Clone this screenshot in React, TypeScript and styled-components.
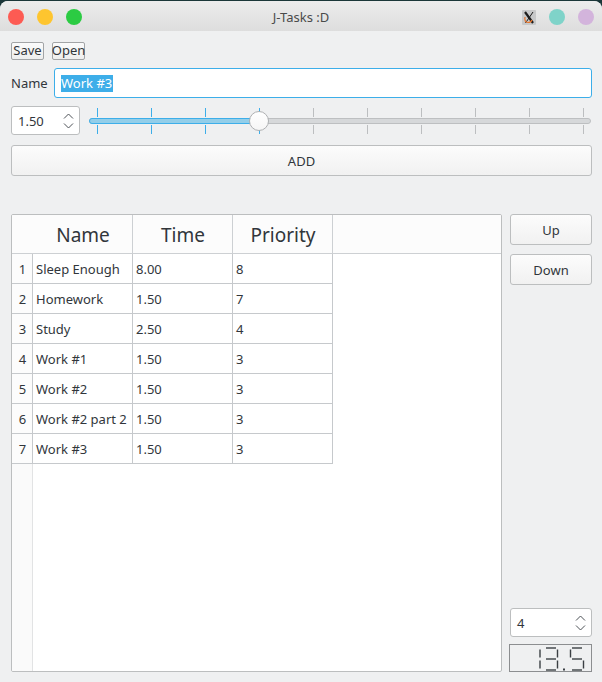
import React from "react";
import styled, { createGlobalStyle } from "styled-components";

const GlobalStyle = createGlobalStyle`
  * { box-sizing: border-box; }
  html, body { margin: 0; padding: 0; background: #1b3739; }
  body {
    width: 602px;
    height: 682px;
    overflow: hidden;
    font-family: "Noto Sans", "Open Sans", sans-serif;
    font-size: 13px;
    color: #31363b;
  }
`;

const Window = styled.div`
  margin-top: 1px;
  width: 602px;
  height: 681px;
  background: #eff0f1;
  border-radius: 8px 8px 0 0;
  overflow: hidden;
  display: flex;
  flex-direction: column;
`;

const TitleBar = styled.div`
  flex: none;
  height: 30px;
  padding: 2px 8px 0;
  display: grid;
  grid-template-columns: 1fr auto 1fr;
  align-items: center;
  background: linear-gradient(#ececec, #dddddd);
`;

const Lights = styled.div`
  display: flex;
  gap: 13px;
`;

const Light = styled.span<{ $c: string }>`
  width: 16px;
  height: 16px;
  border-radius: 50%;
  background: ${(p) => p.$c};
`;

const Title = styled.div`
  font-size: 13px;
  color: #4a4a4a;
`;

const TitleRight = styled.div`
  display: flex;
  justify-content: flex-end;
  align-items: center;
  gap: 13px;
`;

const Body = styled.div`
  flex: 1;
  min-height: 0;
  display: flex;
  flex-direction: column;
  padding: 11px 10px 10px 11px;
`;

const FileRow = styled.div`
  display: flex;
  gap: 8px;
  height: 18px;
`;

const SmallButton = styled.button`
  width: 33px;
  height: 18px;
  padding: 0;
  border: 1px solid #a2a4a6;
  border-radius: 2px;
  background: linear-gradient(#fbfbfb, #eeeeee);
  font-family: inherit;
  font-size: 13px;
  line-height: 15px;
  color: #31363b;
  display: flex;
  justify-content: center;
  overflow: visible;
  white-space: nowrap;
`;

const NameRow = styled.div`
  margin-top: 8px;
  height: 30px;
  display: flex;
  align-items: center;
  gap: 9px;
`;

const Label = styled.span`
  width: 34px;
`;

const TextField = styled.div`
  flex: 1;
  height: 30px;
  border: 1px solid #3daee9;
  border-radius: 3px;
  background: #ffffff;
  display: flex;
  align-items: center;
  padding-left: 6px;
`;

const Selected = styled.span`
  background: #3daee9;
  color: #ffffff;
  line-height: 17px;
  padding-right: 1px;
`;

const SliderRow = styled.div`
  margin-top: 8px;
  height: 29px;
  display: flex;
  gap: 9px;
`;

const SpinBox = styled.div<{ $w?: string }>`
  width: ${(p) => p.$w ?? "69px"};
  height: 29px;
  flex: none;
  background: #ffffff;
  border: 1px solid #bcbebf;
  border-radius: 3px;
  display: flex;
  align-items: center;
  justify-content: space-between;
  padding: 0 5px 0 6px;
`;

const Slider = styled.div`
  flex: 1;
  margin-right: 1px;
  display: flex;
  flex-direction: column;
  padding-top: 2px;
  gap: 1px;
`;

const TickRow = styled.div`
  height: 9px;
  display: flex;
  justify-content: space-between;
  padding: 0 7px 0 8px;
`;

const Tick = styled.span<{ $on: boolean }>`
  width: 1px;
  height: 100%;
  background: ${(p) => (p.$on ? "#3daee9" : "#bcbec0")};
`;

const Groove = styled.div`
  position: relative;
  height: 6px;
  border: 1px solid #bdbfc1;
  border-radius: 3px;
  background: #d6d8da;
`;

const GrooveFill = styled.div`
  height: 6px;
  margin: -1px 0 0 -1px;
  border: 1px solid #3daee9;
  border-radius: 3px;
  background: #93cee9;
`;

const Knob = styled.div`
  position: absolute;
  top: 50%;
  width: 20px;
  height: 20px;
  margin-top: -10px;
  border: 1px solid #aeb0b2;
  border-radius: 50%;
  background: linear-gradient(#ffffff, #f6f6f6);
`;

const PushButton = styled.button<{ $h?: number }>`
  height: ${(p) => p.$h ?? 31}px;
  flex: none;
  width: 100%;
  border: 1px solid #bcbebf;
  border-radius: 3px;
  background: linear-gradient(#fcfcfc, #f1f1f1);
  font-family: inherit;
  font-size: 13px;
  color: #31363b;
  padding: 0;
`;

const AddButton = styled(PushButton)`
  margin-top: 10px;
`;

const Main = styled.div`
  margin-top: 38px;
  flex: 1;
  min-height: 0;
  display: flex;
  gap: 8px;
`;

const Table = styled.div`
  width: 491px;
  flex: none;
  border: 1px solid #bcbebf;
  border-radius: 2px;
  background: #ffffff;
  display: grid;
  grid-template-columns: 21px 100px 100px 100px 1fr;
  grid-template-rows: 39px repeat(7, 30px) 1fr;
  overflow: hidden;
`;

const HeadCell = styled.div<{ $line?: boolean }>`
  background: #fcfcfc;
  border-bottom: 1px solid #cdd0d3;
  border-right: ${(p) => (p.$line ? "1px solid #cdd0d3" : "none")};
  display: flex;
  align-items: center;
  justify-content: center;
  font-size: 19px;
  padding: 2px 0 0 1px;
`;

const RowHead = styled.div`
  background: #fcfcfc;
  border-right: 1px solid #c6c9cc;
  border-bottom: 1px solid #c6c9cc;
  display: flex;
  align-items: center;
  justify-content: center;
  padding-left: 1px;
`;

const Cell = styled.div`
  border-right: 1px solid #c6c9cc;
  border-bottom: 1px solid #c6c9cc;
  display: flex;
  align-items: center;
  padding-left: 3px;
  white-space: nowrap;
`;

const Blank = styled.div``;

const RowHeadFill = styled.div`
  background: #fafafa;
  border-right: 1px solid #e2e3e4;
`;

const Side = styled.div`
  width: 82px;
  flex: none;
  display: flex;
  flex-direction: column;
`;

const SideGap = styled.div<{ $h: number }>`
  height: ${(p) => p.$h}px;
  flex: none;
`;

const Spacer = styled.div`
  flex: 1;
`;

const Lcd = styled.div`
  height: 28px;
  margin-left: -1px;
  border: 1px solid #8c8e90;
  background: #eff0f1;
  display: flex;
`;

const Chevrons = () => (
  <svg width="11" height="18" viewBox="0 0 11 18">
    <path d="M1 6.5 L5.5 2 L10 6.5" fill="none" stroke="#4d5257" strokeWidth="1" />
    <path d="M1 11.5 L5.5 16 L10 11.5" fill="none" stroke="#4d5257" strokeWidth="1" />
  </svg>
);

const XIcon = () => (
  <svg width="14" height="15" viewBox="0 0 14 15">
    <rect x="0" y="0" width="14" height="15" rx="1" fill="#c7c8c9" />
    <path d="M3 2 L11 13" stroke="#1d1d1d" strokeWidth="2.2" />
    <path d="M11 2 L3.5 13" stroke="#1d1d1d" strokeWidth="1" />
    <path d="M3 7 Q2 12 6 12.5 Q9 12.5 10 10" fill="none" stroke="#e8742a" strokeWidth="1.2" />
  </svg>
);

const SEGS: Record<string, string[]> = {
  "1": ["b", "c"],
  "3": ["a", "b", "c", "d", "g"],
  "5": ["a", "f", "g", "c", "d"],
};

const segPath = (s: string, x: number, w: number) => {
  const t = 3, m = 14, b = 25;
  switch (s) {
    case "a": return `M${x + 1.5} ${t} H${x + w - 1.5}`;
    case "b": return `M${x + w} ${t + 1.5} V${m - 1.5}`;
    case "c": return `M${x + w} ${m + 1.5} V${b - 1.5}`;
    case "d": return `M${x + 1.5} ${b} H${x + w - 1.5}`;
    case "e": return `M${x} ${m + 1.5} V${b - 1.5}`;
    case "f": return `M${x} ${t + 1.5} V${m - 1.5}`;
    default: return `M${x + 1.5} ${m} H${x + w - 1.5}`;
  }
};

const LcdDigits = () => {
  const digits: [string, number][] = [["1", 17.5], ["3", 35], ["5", 61]];
  return (
    <svg width="81" height="26" viewBox="0 0 81 26">
      {digits.map(([d, x]) =>
        SEGS[d].map((s) => (
          <path key={d + s} d={segPath(s, x - 0.5, 13)} stroke="#3b3f44" strokeWidth="1.4" fill="none" />
        ))
      )}
      <rect x="53" y="23.5" width="2" height="2" fill="#3b3f44" />
    </svg>
  );
};

const rows: [string, string, string][] = [
  ["Sleep Enough", "8.00", "8"],
  ["Homework", "1.50", "7"],
  ["Study", "2.50", "4"],
  ["Work #1", "1.50", "3"],
  ["Work #2", "1.50", "3"],
  ["Work #2 part 2", "1.50", "3"],
  ["Work #3", "1.50", "3"],
];

export default function App() {
  const ticks = Array.from({ length: 10 }, (_, i) => i);
  const knobTick = 3;
  const knobLeft = 8 + knobTick * 54 - 10;
  return (
    <>
      <GlobalStyle />
      <Window>
        <TitleBar>
          <Lights>
            <Light $c="#fd5b53" />
            <Light $c="#fec52f" />
            <Light $c="#2bcb43" />
          </Lights>
          <Title>J-Tasks :D</Title>
          <TitleRight>
            <XIcon />
            <Light $c="#7fd3c9" />
            <Light $c="#d3b4dc" />
          </TitleRight>
        </TitleBar>
        <Body>
          <FileRow>
            <SmallButton>Save</SmallButton>
            <SmallButton>Open</SmallButton>
          </FileRow>
          <NameRow>
            <Label>Name</Label>
            <TextField>
              <Selected>Work #3</Selected>
            </TextField>
          </NameRow>
          <SliderRow>
            <SpinBox>
              <span>1.50</span>
              <Chevrons />
            </SpinBox>
            <Slider>
              <TickRow>
                {ticks.map((i) => (
                  <Tick key={i} $on={i <= knobTick} />
                ))}
              </TickRow>
              <Groove>
                <GrooveFill style={{ width: knobLeft + 12 }} />
                <Knob style={{ left: knobLeft - 1 }} />
              </Groove>
              <TickRow>
                {ticks.map((i) => (
                  <Tick key={i} $on={i <= knobTick} />
                ))}
              </TickRow>
            </Slider>
          </SliderRow>
          <AddButton>ADD</AddButton>
          <Main>
            <Table>
              <HeadCell />
              <HeadCell $line>Name</HeadCell>
              <HeadCell $line>Time</HeadCell>
              <HeadCell $line>Priority</HeadCell>
              <HeadCell />
              {rows.map((r, i) => (
                <React.Fragment key={i}>
                  <RowHead>{i + 1}</RowHead>
                  <Cell>{r[0]}</Cell>
                  <Cell>{r[1]}</Cell>
                  <Cell>{r[2]}</Cell>
                  <Blank />
                </React.Fragment>
              ))}
              <RowHeadFill />
              <Blank />
              <Blank />
              <Blank />
              <Blank />
            </Table>
            <Side>
              <PushButton>Up</PushButton>
              <SideGap $h={9} />
              <PushButton>Down</PushButton>
              <Spacer />
              <SpinBox $w="82px">
                <span>4</span>
                <Chevrons />
              </SpinBox>
              <SideGap $h={7} />
              <Lcd>
                <LcdDigits />
              </Lcd>
            </Side>
          </Main>
        </Body>
      </Window>
    </>
  );
}
